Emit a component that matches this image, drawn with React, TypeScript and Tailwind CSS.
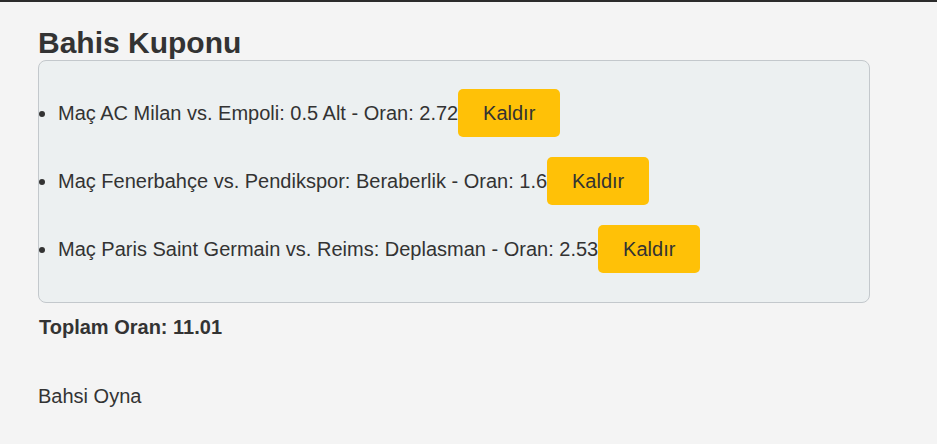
const bets = [
  { match: "AC Milan vs. Empoli", pick: "0.5 Alt", odds: "2.72" },
  { match: "Fenerbahçe vs. Pendikspor", pick: "Beraberlik", odds: "1.6" },
  { match: "Paris Saint Germain vs. Reims", pick: "Deplasman", odds: "2.53" },
];

export default function App() {
  return (
    <div className="min-h-screen border-t-2 border-[#2b2b2b] bg-[#f4f4f4] pl-[38px] pt-[24px] font-['Liberation_Sans',Arial,sans-serif] text-[#333]">
      <h2 className="text-[30px] font-bold leading-[34px]">Bahis Kuponu</h2>

      <div className="w-[832px] rounded-[8px] border border-[#c3c8cc] bg-[#ecf0f1] px-[19px] pt-[28px] pb-[29px]">
        <ul className="flex list-disc flex-col gap-[20px] text-[20px]">
          {bets.map((bet) => (
            <li key={bet.match}>
              <div className="flex h-[48px] items-center">
                <span>
                  Maç {bet.match}: {bet.pick} - Oran: {bet.odds}
                </span>
                <button className="h-[48px] w-[102px] rounded-[5px] bg-[#ffc107] text-[#333]">Kaldır</button>
              </div>
            </li>
          ))}
        </ul>
      </div>

      <p className="mt-[13px] pl-[1px] text-[20px] font-bold leading-[22px]">Toplam Oran: 11.01</p>
      <p className="mt-[47px] text-[20px] leading-[22px]">Bahsi Oyna</p>
    </div>
  );
}
